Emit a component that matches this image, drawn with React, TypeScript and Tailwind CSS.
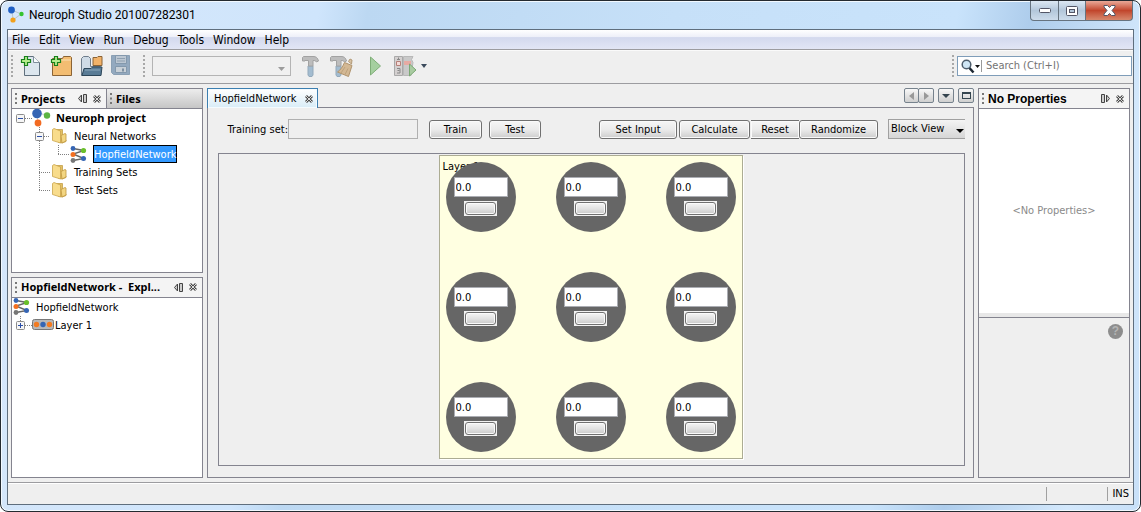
import type { ReactNode } from "react";

const menus = ["File", "Edit", "View", "Run", "Debug", "Tools", "Window", "Help"];
const neurons = [1, 2, 3, 4, 5, 6, 7, 8, 9];

function LogoIcon() {
  return (
    <svg width="18" height="18" viewBox="0 0 18 18" aria-hidden="true">
      <path d="M5 4 14 8 6 14Z" fill="none" stroke="#b9c6cf" />
      <circle cx="4.5" cy="4" r="3.4" fill="#1f5fc4" />
      <circle cx="14.5" cy="8" r="2.2" fill="#35c32f" />
      <circle cx="6" cy="14" r="2.6" fill="#f2a11c" />
    </svg>
  );
}

function ProjectIcon() {
  return (
    <svg width="20" height="20" viewBox="0 0 20 20" aria-hidden="true">
      <path d="M5 5 15 7M5 5 6 15" stroke="#c5cbd3" />
      <circle cx="5" cy="5.5" r="4.8" fill="#3565b4" />
      <circle cx="15" cy="7.5" r="3.2" fill="#5db544" />
      <circle cx="6" cy="15" r="3.4" fill="#f26a21" />
    </svg>
  );
}

function NetworkIcon() {
  return (
    <svg width="17" height="17" viewBox="0 0 17 17" aria-hidden="true">
      <path d="M3 2.5 14 4.5 3 8 14 12.5 3 14.5" fill="none" stroke="#666" strokeWidth="1.4" />
      <circle cx="3" cy="2.5" r="2.4" fill="#3565b4" />
      <circle cx="13.5" cy="4.5" r="2.6" fill="#6abf2b" />
      <circle cx="3" cy="8.5" r="2.5" fill="#f36f21" />
      <circle cx="13.5" cy="12.5" r="2.5" fill="#3565b4" />
      <circle cx="3" cy="14.5" r="2.4" fill="#777" />
    </svg>
  );
}

function FolderIcon() {
  return (
    <svg width="15" height="16" viewBox="0 0 15 16" aria-hidden="true">
      <path d="M4.5 1.5h6V12H14v1.5L10 15l-4-1z" fill="#e3bf62" stroke="#c49f4a" strokeWidth=".8" />
      <path d="M9 7.5l4-2 1 .5v7l-4 2z" fill="#f3d682" stroke="#bf9740" strokeWidth=".8" />
      <path d="M.5 1.5 2 .5 8.5 3v12l-8-2.5z" fill="#f8dc8c" stroke="#caa54c" strokeWidth=".8" />
    </svg>
  );
}

function LayerIcon() {
  return (
    <svg width="22" height="12" viewBox="0 0 22 12" aria-hidden="true">
      <rect x=".5" y=".5" width="21" height="10" rx="2" fill="#b8b8b8" stroke="#777" />
      <circle cx="4.5" cy="5.5" r="2.7" fill="#f37b21" />
      <circle cx="11" cy="5.5" r="2.7" fill="#3565b4" />
      <circle cx="17.5" cy="5.5" r="2.7" fill="#f37b21" />
    </svg>
  );
}

// Dotted guides of one tree row; x values are measured from the left edge of the tree.
function Guides({ width, lines, box, plus }: { width: number; lines: string; box?: number; plus?: boolean }) {
  const drawing = (
    <svg width={width} height="18" viewBox={`0 0 ${width} 18`} className="block shrink-0" aria-hidden="true">
      <path d={lines} fill="none" stroke="#808080" strokeDasharray="1 1" />
      {box !== undefined && (
        <g>
          <rect x={box + 0.5} y="5.5" width="8" height="8" rx="1" fill="#f6f6f6" stroke="#8c8c8c" />
          <path d={`M${box + 2} 9.5h5`} stroke="#2b4fa8" />
          {plus && <path d={`M${box + 4.5} 7v5`} stroke="#2b4fa8" />}
        </g>
      )}
    </svg>
  );
  if (box === undefined) return drawing;
  return (
    <button type="button" aria-label={plus ? "Expand" : "Collapse"} className="shrink-0">
      {drawing}
    </button>
  );
}

function Grip({ tall }: { tall?: boolean }) {
  return (
    <svg width="2" height={tall ? 23 : 11} className="shrink-0" aria-hidden="true">
      <path d={tall ? "M1 0v23" : "M1 0v11"} stroke={tall ? "#a8a8a8" : "#777"} strokeWidth="2" strokeDasharray={tall ? "2 2" : "2 2.5"} />
    </svg>
  );
}

function CloseMark() {
  return (
    <svg width="8" height="8" viewBox="0 0 8 8" aria-hidden="true">
      <path d="M1 1l6 6M7 1 1 7" stroke="#4a4a4a" strokeWidth="2.8" />
      <path d="M1 1l6 6M7 1 1 7" stroke="#eee" strokeWidth=".9" />
    </svg>
  );
}

function PinMark({ right }: { right?: boolean }) {
  return (
    <svg width="9" height="9" viewBox="0 0 9 9" aria-hidden="true">
      {right ? (
        <path d="M.5.5h3v8h-3zM5.5 1v7l3-3.5z" fill="#ccc" stroke="#444" />
      ) : (
        <path d="M8.5.5h-3v8h3zM3.5 1v7l-3-3.5z" fill="#ccc" stroke="#444" />
      )}
    </svg>
  );
}

function HeaderButtons({ right }: { right?: boolean }) {
  return (
    <span className="ml-auto flex items-center gap-1.5">
      <button type="button" aria-label="Minimize panel">
        <PinMark right={right} />
      </button>
      <button type="button" aria-label="Close panel">
        <CloseMark />
      </button>
    </span>
  );
}

function PlusPath() {
  return <path d="M4.5 1.5h3v3h3v3h-3v3h-3v-3h-3v-3h3z" fill="#b6ee8e" stroke="#17811a" strokeWidth="1.2" />;
}

function NewFileIcon() {
  return (
    <svg width="22" height="22" viewBox="0 0 22 22" aria-hidden="true">
      <path d="M4.5 1.5h9l6 6v13h-15z" fill="#dce6ee" stroke="#5f6f7d" />
      <path d="M13.5 1.5v6h6" fill="#f8fbfd" stroke="#7e8d9a" />
      <PlusPath />
    </svg>
  );
}

function NewProjectIcon() {
  return (
    <svg width="22" height="22" viewBox="0 0 22 22" aria-hidden="true">
      <path d="M2.5 3.5h10l1-2h7l1 1v18h-19z" fill="#f3bd72" stroke="#8a6335" />
      <path d="M3 5h18" stroke="#fbe0b4" />
      <PlusPath />
    </svg>
  );
}

function OpenIcon() {
  return (
    <svg width="23" height="22" viewBox="0 0 23 22" aria-hidden="true">
      <path d="M1.5 20.5v-17l2-2h5l2 2v8h10v9z" fill="#cfdbe6" stroke="#6d7c8b" />
      <path d="M13 2.5h4l1-1h4v9h-9z" fill="#f1b269" stroke="#8a6335" />
      <path d="M2 20.500 4 13.500h7l1.500-1.500H22l-1 8.500z" fill="#5a7c96" stroke="#2c4659" />
      <path d="M5 15h15" stroke="#8da9bd" />
    </svg>
  );
}

function SaveIcon() {
  return (
    <svg width="20" height="22" viewBox="0 0 20 22" aria-hidden="true">
      <path d="M.5.5h18v19h-16l-2-2z" fill="#93a9bf" stroke="#8ba0b4" />
      <path d="M4.5.5h11v8h-11z" fill="#bcc7d2" stroke="#8398ac" />
      <path d="M6 3.5h8M6 6h8" stroke="#8fa0b0" />
      <path d="M4.5 11.5h11v6h-11z" fill="#c8d0d7" stroke="#8398ac" />
      <path d="M11 13.5h2v3h-2z" fill="#7e90a2" />
    </svg>
  );
}

function HammerPath() {
  return (
    <g>
      <path d="M7 11h5v9l-1 1.500H8L7 20z" fill="#a3bcd0" stroke="#93a9bb" />
      <path d="M1.5 6V2.500l1-1H12c3 0 4.500 1 5.500 4.500L15.500 7C14.500 5.500 13.500 5.500 12 5.500V11H7.500V5.500H4V6z" fill="#bdbdbd" stroke="#a2a2a2" />
    </g>
  );
}

function BroomPath() {
  return (
    <g>
      <path d="M19.5 6.500l1.500-2.500 2 1-.5 4z" fill="#d8c2a4" stroke="#b39a78" />
      <path d="M15.5 7.5l7.500 3-3.500 11-11-4.500c3-2 5-5 7-9.500z" fill="#d3b894" stroke="#b0946e" />
      <path d="M12 18l4-6M16 19.500l3-6" stroke="#bda27d" />
    </g>
  );
}

function DebugIcon() {
  return (
    <svg width="23" height="22" viewBox="0 0 23 22" aria-hidden="true">
      <path d="M.5 1.500h8v19h-8z" fill="#d4d0d0" stroke="#a9a9a9" />
      <path d="M9.5 1.500H19l-1.500 3 1.500 3-2 13H9.500z" fill="#c9c9c9" stroke="#b8b8b8" />
      <path d="M10 6h7v4h-7z" fill="#e7aaa3" />
      <path d="M2.500 6.500h4v4h-4z" fill="#f3dcd9" stroke="#b77f78" />
      <path d="M4.500 2.500v2M3 4.500h3M3 13.500h3v4.500h-3M3.500 15.500h2" fill="none" stroke="#888" />
      <path d="M15.500 9l6.500 6-6.500 6z" fill="#a9cba1" stroke="#7ba974" />
    </svg>
  );
}

function ToolButton({ label, children, disabled }: { label: string; children: ReactNode; disabled?: boolean }) {
  return (
    <button type="button" aria-label={label} disabled={disabled} className="shrink-0">
      {children}
    </button>
  );
}

const pushButton =
  "h-[19px] rounded-[3px] border border-[#707070] bg-linear-to-b from-[#f6f6f6] via-[#ebebeb] via-50% to-[#cdcdcd] pt-px text-center leading-4 shadow-[inset_0_0_0_1px_#fafafa]";
const smallButton =
  "flex h-[15px] items-center justify-center rounded-[2px] border border-[#76828d] bg-linear-to-b from-[#f8f8f8] to-[#cfcfcf]";
const captionButton = "flex h-5 items-center justify-center border-x border-b border-[#66737f]";
const boldText = "font-['Noto_Sans',sans-serif] font-bold";
const treeRow = "flex h-[18px] items-center";
const treeText = "pt-0.5 leading-4";

function Neuron({ index }: { index: number }) {
  return (
    <div className="flex size-[70px] flex-col items-center gap-1 rounded-full bg-[#666] pt-[15px]">
      <input
        aria-label={`Neuron ${index} output`}
        defaultValue="0.0"
        className="h-5 w-[54px] border border-[#abadb3] bg-white px-px text-[11px] leading-4 outline-none"
      />
      <button type="button" aria-label={`Neuron ${index}`} className="h-[15px] w-[33px] bg-[#f2f2f2] p-px">
        <span className="block h-full rounded-[3px] border border-[#707070] bg-linear-to-b from-[#f4f4f4] via-[#e2e2e2] via-50% to-[#cacaca] shadow-[inset_0_0_0_1px_#fafafa]" />
      </button>
    </div>
  );
}

function TitleBar() {
  return (
    <header className="flex h-7 shrink-0 items-start">
      <div className="flex flex-1 items-center gap-1 pt-[5px] pl-1.5">
        <LogoIcon />
        <h1 className="font-[Roboto,sans-serif] text-[12px] leading-[18px]">Neuroph Studio 201007282301</h1>
      </div>
      <div className="mr-[7px] flex">
        <button type="button" aria-label="Minimize" className={`${captionButton} w-[29px] rounded-bl-[4px] bg-linear-to-b from-[#dce8f3] via-[#b3c7da] via-50% to-[#cddceb]`}>
          <svg width="12" height="5" aria-hidden="true">
            <rect x=".5" y=".5" width="11" height="4" rx="1" fill="#fff" stroke="#535666" />
          </svg>
        </button>
        <button type="button" aria-label="Maximize" className={`${captionButton} -ml-px w-7 bg-linear-to-b from-[#dce8f3] via-[#b3c7da] via-50% to-[#cddceb]`}>
          <svg width="12" height="10" aria-hidden="true">
            <rect x=".5" y=".5" width="11" height="9" rx="1" fill="#fff" stroke="#535666" />
            <rect x="3.5" y="3.5" width="5" height="3" fill="#b3c7da" stroke="#535666" />
          </svg>
        </button>
        <button type="button" aria-label="Close" className={`${captionButton} -ml-px w-12 rounded-br-[4px] bg-linear-to-b from-[#e9a898] via-[#c1452c] via-50% to-[#d6876c]`}>
          <svg width="13" height="11" viewBox="0 0 13 11" aria-hidden="true">
            <path d="M1 .5h3.500l2 2 2-2H12v1.500L9 5.500l3 3.500v1.500H8.500l-2-2-2 2H1V9l3-3.500L1 2z" fill="#fff" stroke="#535666" />
          </svg>
        </button>
      </div>
    </header>
  );
}

function Toolbar() {
  return (
    <div className="flex h-[34px] shrink-0 items-start border-b border-[#9c9ca0] pt-[5px] pr-px pl-[3px] shadow-[inset_0_1px_0_#fafafa]">
      <Grip tall />
      <div className="ml-[7px] flex gap-2">
        <ToolButton label="New File"><NewFileIcon /></ToolButton>
        <ToolButton label="New Project"><NewProjectIcon /></ToolButton>
        <ToolButton label="Open Project"><OpenIcon /></ToolButton>
        <ToolButton label="Save All" disabled><SaveIcon /></ToolButton>
      </div>
      <span className="ml-3">
        <Grip tall />
      </span>
      <div className="relative ml-[7px] w-[139px]">
        <select aria-label="Configuration" disabled className="mt-px block h-5 w-full appearance-none border border-[#b4b4b4] bg-[#f0f0f0]" />
        <svg width="7" height="4" className="absolute top-3 right-1.5" aria-hidden="true">
          <path d="M0 0h7L3.5 4z" fill="#9c9c9c" />
        </svg>
      </div>
      <div className="ml-2.5 flex items-start">
        <ToolButton label="Build" disabled>
          <svg width="20" height="23" aria-hidden="true"><HammerPath /></svg>
        </ToolButton>
        <span className="ml-2 flex">
          <ToolButton label="Clean and Build" disabled>
            <svg width="25" height="23" aria-hidden="true">
              <HammerPath />
              <BroomPath />
            </svg>
          </ToolButton>
        </span>
        <span className="ml-[15px] flex">
          <ToolButton label="Run" disabled>
            <svg width="13" height="22" aria-hidden="true">
              <path d="M1.500 2v18L11.500 11z" fill="#a5cf9f" stroke="#7fae78" />
            </svg>
          </ToolButton>
        </span>
        <span className="ml-3 flex items-center gap-1">
          <ToolButton label="Debug" disabled><DebugIcon /></ToolButton>
          <button type="button" aria-label="Debug options">
            <svg width="7" height="4" aria-hidden="true"><path d="M0 0h6L3 4z" fill="#3b4a5c" /></svg>
          </button>
        </span>
      </div>
      <div className="ml-auto flex items-start gap-[3px]">
        <Grip tall />
        <label className="mt-px flex h-5 w-[175px] items-center border border-[#7f9db9] bg-white pl-[3px]">
          <svg width="20" height="15" viewBox="0 0 20 15" aria-label="Search" role="img">
            <path d="M8 8.500 12.500 13.500" stroke="#1c2732" strokeWidth="2.500" />
            <circle cx="5.500" cy="5.500" r="4.300" fill="#cfe6f5" stroke="#4d5d6c" strokeWidth="1.500" />
            <path d="M14 6h5l-2.500 3z" fill="#111" />
          </svg>
          <span className="h-3 w-px bg-[#9a9a9a]" />
          <input placeholder="Search (Ctrl+I)" className="min-w-0 flex-1 pl-1 leading-4 outline-none placeholder:text-[#737373]" />
        </label>
      </div>
    </div>
  );
}

function ProjectsPanel() {
  return (
    <section className="flex min-h-0 flex-[185] flex-col border border-[#84848f] bg-white">
      <div className={`${boldText} flex h-5 shrink-0 border-b border-[#84848f]`}>
        <div className="flex w-[95px] items-center gap-1 border-r border-[#84848f] bg-[#f4f4f4] pr-[5px] pl-[3px]">
          <Grip />
          <h2>Projects</h2>
          <HeaderButtons />
        </div>
        <div className="flex flex-1 items-center gap-1 bg-linear-to-b from-[#ededed] to-[#c6c6c6] px-[3px]">
          <Grip />
          <h2>Files</h2>
        </div>
      </div>
      <ul>
        <li className={treeRow}>
          <Guides width={20} lines="M13 9.5h7" box={4} />
          <ProjectIcon />
          <span className={`${boldText} ml-1`}>Neuroph project</span>
        </li>
        <li className={treeRow}>
          <Guides width={40} lines="M27.5 0v18M32 9.5h6" box={23} />
          <FolderIcon />
          <span className={`${treeText} ml-[7px]`}>Neural Networks</span>
        </li>
        <li className={treeRow}>
          <Guides width={58} lines="M27.5 0v18M46.5 0v10M46 9.5h12" />
          <NetworkIcon />
          <span className="ml-1.5 h-[18px] border border-black bg-[#3399ff] leading-[17px] text-white">HopfieldNetwork</span>
        </li>
        <li className={treeRow}>
          <Guides width={40} lines="M27.5 0v18M27 9.5h11" />
          <FolderIcon />
          <span className={`${treeText} ml-[7px]`}>Training Sets</span>
        </li>
        <li className={treeRow}>
          <Guides width={40} lines="M27.5 0v10M27 9.5h11" />
          <FolderIcon />
          <span className={`${treeText} ml-[7px]`}>Test Sets</span>
        </li>
      </ul>
    </section>
  );
}

function ExplorerPanel() {
  return (
    <section className="flex min-h-0 flex-[202] flex-col border border-[#84848f] bg-white">
      <div className={`${boldText} flex h-5 shrink-0 items-center gap-1 border-b border-[#84848f] bg-[#f4f4f4] pr-[5px] pl-[3px]`}>
        <Grip />
        <h2 className="whitespace-pre">HopfieldNetwork -  Expl...</h2>
        <HeaderButtons />
      </div>
      <ul>
        <li className={`${treeRow} pl-px`}>
          <NetworkIcon />
          <span className={`${treeText} ml-1.5`}>HopfieldNetwork</span>
        </li>
        <li className={treeRow}>
          <Guides width={20} lines="M8.5 0v5M13 9.5h7" box={4} plus />
          <LayerIcon />
          <span className={`${treeText} ml-px`}>Layer 1</span>
        </li>
      </ul>
    </section>
  );
}

function Editor() {
  return (
    <main className="flex min-w-0 flex-1 flex-col">
      <div className="flex h-[19px] shrink-0 items-start">
        <div className="z-10 flex h-5 w-[111px] items-center border border-b-0 border-[#3c7fb1] bg-linear-to-b from-white to-[#d8ecf7] pr-1 pl-1.5 shadow-[inset_0_0_0_1px_#f4fbff]">
          <span>HopfieldNetwork</span>
          <button type="button" aria-label="Close tab" className="ml-auto">
            <CloseMark />
          </button>
        </div>
        <div className="ml-auto flex gap-1">
          <div className="flex">
            <button type="button" aria-label="Scroll left" disabled className={`${smallButton} w-[15px]`}>
              <svg width="5" height="8" aria-hidden="true"><path d="M5 0v8L0 4z" fill="#999" /></svg>
            </button>
            <button type="button" aria-label="Scroll right" disabled className={`${smallButton} -ml-px w-4`}>
              <svg width="5" height="8" aria-hidden="true"><path d="M0 0v8l5-4z" fill="#999" /></svg>
            </button>
          </div>
          <button type="button" aria-label="Documents" className={`${smallButton} w-4`}>
            <svg width="8" height="4" aria-hidden="true"><path d="M0 0h8L4 4z" fill="#35454f" /></svg>
          </button>
          <button type="button" aria-label="Maximize editor" className={`${smallButton} w-4`}>
            <svg width="9" height="7" aria-hidden="true">
              <rect x=".5" y="1" width="8" height="5.5" fill="none" stroke="#35454f" />
              <path d="M0 1h9" stroke="#35454f" strokeWidth="2" />
            </svg>
          </button>
        </div>
      </div>
      <div className="flex min-h-0 flex-1 flex-col border border-[#84848f] pr-2 pb-[11px] pl-2.5">
        <div className="mt-[11px] flex items-center">
          <label htmlFor="training-set" className={`${treeText} w-[70px] text-right whitespace-nowrap`}>Training set:</label>
          <input id="training-set" disabled className="h-5 w-[130px] border border-[#b0b0b0] bg-[#efefef]" />
          <button type="button" className={`${pushButton} ml-[11px] w-[53px]`}>Train</button>
          <button type="button" className={`${pushButton} ml-[7px] w-[52px]`}>Test</button>
          <div className="ml-auto flex items-center">
            <button type="button" className={`${pushButton} w-[78px]`}>Set Input</button>
            <button type="button" className={`${pushButton} ml-0.5 w-[71px]`}>Calculate</button>
            <button type="button" className={`${pushButton} ml-px w-12 rounded-none border-x-0`}>Reset</button>
            <button type="button" className={`${pushButton} w-[79px]`}>Randomize</button>
            <div className="relative ml-2.5 w-[77px]">
              <select aria-label="View mode" className="block h-5 w-full appearance-none rounded-none border border-r-0 border-[#a0a0a0] bg-linear-to-b from-[#f4f4f4] to-[#d6d6d6] pl-0.5 leading-4">
                <option>Block View</option>
              </select>
              <svg width="8" height="4" className="pointer-events-none absolute top-2.5 right-px" aria-hidden="true">
                <path d="M0 0h8L4 4z" fill="#000" />
              </svg>
            </div>
          </div>
        </div>
        <div className="mt-3.5 flex min-h-0 flex-1 items-start justify-center border border-[#84848f] pt-px pr-0.5">
          <div className="relative mb-2 border border-[#acac93] bg-[#ffffe1] p-1.5 shadow-[1px_1px_0_#fff]">
            <span className="absolute top-[3px] left-[3px]">Layer 1</span>
            <div className="relative grid grid-cols-3 gap-10">
              {neurons.map((n) => (
                <Neuron key={n} index={n} />
              ))}
            </div>
          </div>
        </div>
      </div>
    </main>
  );
}

function PropertiesPanel() {
  return (
    <aside className="flex w-[152px] shrink-0 flex-col border border-[#84848f]">
      <div className="flex h-5 shrink-0 items-center gap-1 border-b border-[#84848f] bg-[#f4f4f4] pr-[5px] pl-[3px]">
        <Grip />
        <h2 className="font-['Liberation_Sans',sans-serif] text-[12px] font-bold">No Properties</h2>
        <HeaderButtons right />
      </div>
      <div className="flex flex-[213] items-center justify-center border-b-4 border-[#e8e8e8] bg-white text-[#8a8a8a]">
        &lt;No Properties&gt;
      </div>
      <div className="flex flex-[153] items-start justify-end border-t border-[#84848f] p-1.5">
        <button type="button" aria-label="Help" className="size-[15px] rounded-full bg-[#8d8d8d] font-['Liberation_Sans',sans-serif] text-[12px] leading-[15px] font-bold text-[#b4b4b4]">
          ?
        </button>
      </div>
    </aside>
  );
}

export default function App() {
  return (
    <div className="h-screen bg-white">
      <div className="flex h-full flex-col rounded-lg border border-[#242a30] bg-[linear-gradient(100deg,#d6e7fa_0%,#cfe5fc_26%,#bcd8f2_30%,#c6e0f8_55%,#c9e3fb_78%,#aecdec_84%,#d3e8fc_94%,#c8e0f8_100%)] font-['DejaVu_Sans_Condensed','Noto_Sans',sans-serif] text-[11px] leading-4 text-black shadow-[inset_0_0_0_1px_#f2f9ff]">
        <TitleBar />
        <div className="mx-1.5 mb-1.5 flex min-h-0 flex-1 flex-col border border-[#5f6e7d] bg-[#efefef]">
          <nav className="flex h-5 shrink-0 items-center gap-[9px] border-b border-[#9c9ca0] bg-[linear-gradient(#fff,#eef0f9_35%,#d3d9ee_40%,#e2e6f5)] pl-1 text-[12px]">
            {menus.map((menu) => (
              <button key={menu} type="button">
                {menu}
              </button>
            ))}
          </nav>
          <Toolbar />
          <div className="flex min-h-0 flex-1 gap-1 px-[3px] py-1">
            <div className="flex w-48 shrink-0 flex-col gap-1">
              <ProjectsPanel />
              <ExplorerPanel />
            </div>
            <Editor />
            <PropertiesPanel />
          </div>
          <footer className="flex h-[22px] shrink-0 items-center justify-end border-t border-[#9c9ca0] pr-1 shadow-[inset_0_1px_0_#fff]">
            <span className="h-3.5 w-[61px] border-l border-[#a0a0a0]" />
            <span className="h-3.5 border-l border-[#a0a0a0] pl-1 leading-3.5">INS</span>
          </footer>
        </div>
      </div>
    </div>
  );
}
